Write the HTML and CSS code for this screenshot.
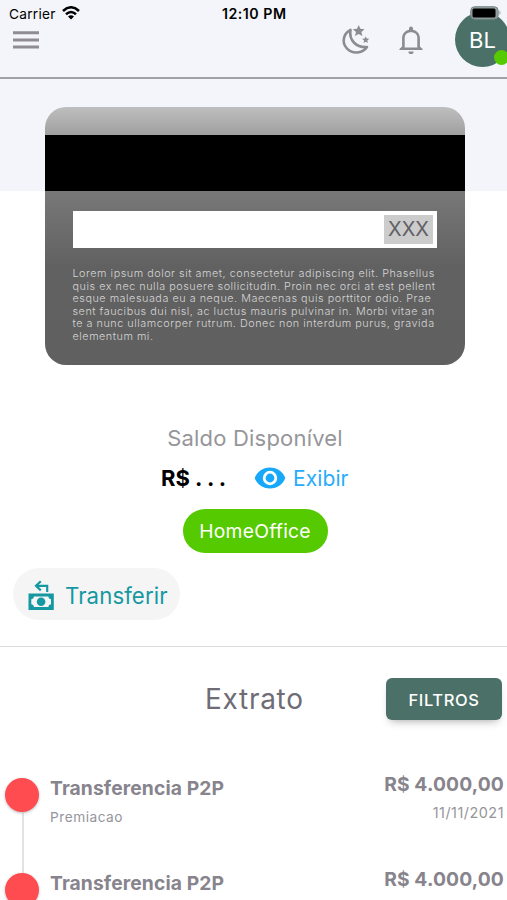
FILE: index.html
```html
<!DOCTYPE html>
<html lang="pt-BR">
<head>
<meta charset="utf-8">
<title>Conta</title>
<link rel="stylesheet" href="styles.css">
</head>
<body>
<header class="topbar">
  <div class="status">
    <span class="carrier">Carrier</span>
    <svg class="wifi" viewBox="0 0 18 14" width="18" height="14"><g fill="none" stroke="#000" stroke-width="2.5"><path d="M1 5Q9-2.4 17 5"/><path d="M4 8.3Q9 3.8 14 8.3"/></g><path d="M6 10.5Q9 7.9 12 10.5L9 13.5Z"/></svg>
    <span class="clock">12:10 PM</span>
    <svg class="battery" viewBox="0 0 32 14" width="32" height="14"><rect x=".7" y=".7" width="27.5" height="12.4" rx="4" fill="#91a09f" stroke="#7d8887"/><rect x="2.5" y="2.5" width="23" height="9" rx="1.6"/><path d="M29.5 4.5q2 2.2 0 4.5z" fill="#8d9998"/></svg>
  </div>
  <nav class="tools">
    <svg class="menu" viewBox="0 0 26 18" width="26" height="18"><path d="M0 1.700h26M0 8.900h26M0 16.100h26" stroke="#8f8c94" stroke-width="3"/></svg>
    <svg class="moon" viewBox="0 0 30 30" width="30" height="30"><path d="M9.500 4.800C2.300 8.500.6 17.200 5.500 23C11 29.500 21.500 28.800 26 22C15.500 22.800 7.600 15.500 9.500 4.800Z" fill="none" stroke="#8c8b93" stroke-width="2.600" stroke-linejoin="round"/><path fill="#8c8b93" d="m17.700 0 1.700 3.800 4.200.4-3.200 2.700 1 4.200-3.700-2.200-3.700 2.200 1-4.200-3.200-2.700 4.200-.4zM24.700 11.300l1 2.300 2.600.2-2 1.700.6 2.600-2.200-1.400-2.200 1.400.6-2.600-2-1.700 2.600-.2z"/></svg>
    <svg class="bell" viewBox="0 0 24 28" width="24" height="28"><path d="M.4 24v-1.100l2.700-2.500v-8.300C3.100 7.800 6 4.600 10 3.700V2.400a2 2 0 0 1 4 0v1.300c4 .9 6.900 4.100 6.900 8.400v8.300l2.700 2.500V24z" fill="#8c8b93"/><path d="M5.700 21.500v-9.700c0-3.300 2.700-5.500 6.300-5.500s6.300 2.200 6.300 5.500v9.700z" fill="#f4f5fa"/><path d="M9.400 25.400h5.200a2.600 2.600 0 0 1-5.200 0" fill="#8c8b93"/></svg>
    <div class="avatar">BL<i class="online"></i></div>
  </nav>
</header>
<main>
  <section class="hero">
    <div class="card">
      <div class="stripe"></div>
      <div class="signature"><span class="cvv">XXX</span></div>
      <p class="terms">Lorem ipsum dolor sit amet, consectetur adipiscing elit. Phasellus<br>quis ex nec nulla posuere sollicitudin. Proin nec orci at est pellent<br>esque malesuada eu a neque. Maecenas quis porttitor odio. Prae<br>sent faucibus dui nisl, ac luctus mauris pulvinar in. Morbi vitae an<br>te a nunc ullamcorper rutrum. Donec non interdum purus, gravida<br>elementum mi.</p>
    </div>
  </section>
  <section class="balance">
    <h2 class="label">Saldo Disponível</h2>
    <div class="amount-row">
      <strong class="amount">R$ . . .</strong>
      <svg class="eye" viewBox="0 0 32 22" width="32" height="22"><path fill="#18a8fa" d="M16 .5C8.500.5 3 5 .7 11 3 17 8.500 21.500 16 21.500S29 17 31.300 11C29 5 23.500.5 16 .5"/><circle cx="16" cy="11" r="7.200" fill="#fff"/><circle cx="16" cy="11" r="4.400" fill="#18a8fa"/></svg>
      <span class="show">Exibir</span>
    </div>
    <span class="tag">HomeOffice</span>
  </section>
  <section class="actions">
    <div class="transfer">
      <svg viewBox="0 0 26 30" width="26" height="30"><path d="M12.800 1.200 8 5.800l4.800 4.600M8.500 5.800h10.700V12" fill="none" stroke="#1698a3" stroke-width="2.200"/><path fill="#1698a3" fill-rule="evenodd" d="M.5 13.500h25.300V30H.5zM6 16.600a3 3 0 0 1-2.700 2.700v5a3 3 0 0 1 2.700 2.700h14.300a3 3 0 0 1 2.700-2.700v-5a3 3 0 0 1-2.700-2.700z"/><circle cx="13.100" cy="21.800" r="4.300" fill="#1698a3"/></svg>
      <span>Transferir</span>
    </div>
  </section>
  <section class="statement">
    <div class="statement-head">
      <h2 class="title">Extrato</h2>
      <button class="filter">FILTROS</button>
    </div>
    <ul class="timeline">
      <li class="entry">
        <div class="rail"><i class="dot"></i></div>
        <div class="info"><b class="name">Transferencia P2P</b><span class="small">Premiacao</span></div>
        <div class="values"><b class="value">R$ 4.000,00</b><span class="small date">11/11/2021</span></div>
      </li>
      <li class="entry">
        <div class="rail"><i class="dot"></i></div>
        <div class="info"><b class="name">Transferencia P2P</b></div>
        <div class="values"><b class="value">R$ 4.000,00</b></div>
      </li>
    </ul>
  </section>
</main>
</body>
</html>
```
FILE: styles.css
```css
* { box-sizing: border-box; }
html, body { height: 900px; overflow: hidden; }
body { margin: 0; background: #fff; font-family: Inter, "Liberation Sans", sans-serif; color: #6f6c76; }
h2, p, ul { margin: 0; padding: 0; font-weight: 400; }
svg { display: block; flex: none; }

.topbar { position: relative; height: 79px; background: #f4f5fa; border-bottom: 2px solid #a1a2a8; }
.status { position: absolute; z-index: 2; top: 6px; left: 9px; right: 5px; height: 16px; display: flex; align-items: center; color: #000; }
.carrier { width: 47px; font-size: 13.700px; letter-spacing: .25px; }
.wifi { margin: -2px 0 0 6px; }
.clock { margin: -1px 0 0 142px; font-size: 14.200px; font-weight: 600; letter-spacing: .5px; white-space: nowrap; }
.battery { margin: -3px 0 0 auto; }
.tools { height: 77px; display: flex; align-items: center; padding: 3px 0 0 13px; overflow: hidden; }
.menu { margin-right: 302px; }
.moon { margin-right: 28px; }
.bell { margin-right: 32px; }
.avatar { position: relative; flex: none; width: 55px; height: 55px; margin-top: -1px; border-radius: 50%; background: #4b7068; color: #fff; font-size: 22px; line-height: 56px; text-align: center; }
.online { position: absolute; right: 1px; bottom: 2px; width: 15px; height: 15px; border-radius: 50%; background: #56ca00; }

.hero { padding: 28px 42px 0 45px; height: 344px; background: linear-gradient(#f4f5fa 112px, #fff 112px); }
.card { height: 258px; padding-top: 28px; border-radius: 21px; overflow: hidden; background: linear-gradient(#bebebe 0, #a0a0a0 28px, #787878 84px, #616161 160px, #606060 100%); }
.stripe { height: 56px; background: #000; }
.signature { display: flex; justify-content: flex-end; margin: 20px 28px 0; height: 37px; padding: 4px; background: #fff; }
.cvv { width: 49px; height: 29px; background: #ccc; color: #606066; font-size: 20px; line-height: 29px; text-align: center; }
.terms { margin: 20px 0 0 27.500px; color: #d5d5d5; font-size: 10.800px; line-height: 12.600px; letter-spacing: .53px; white-space: nowrap; font-weight: 300; }

.balance { display: flex; flex-direction: column; align-items: center; height: 145px; }
.label { margin-left: 3px; font-size: 22px; line-height: 30px; letter-spacing: .2px; color: #96969a; }
.amount-row { display: flex; align-items: center; align-self: stretch; height: 30px; margin-top: 10px; padding-left: 161px; }
.amount { width: 93px; color: #000; font-size: 22px; font-weight: 700; white-space: nowrap; }
.show { margin-left: 7px; color: #28acfa; font-size: 21px; letter-spacing: .1px; }
.tag { width: 145px; height: 44px; margin: 16px 0 0 3px; border-radius: 22px; background: #56ca00; color: #fff; font-size: 19.300px; line-height: 45px; text-align: center; letter-spacing: .25px; }
.actions { height: 79px; padding-left: 13px; border-bottom: 1px solid #dddde0; }
.transfer { display: flex; align-items: center; width: 167px; height: 52px; padding: 2px 0 0 15px; border-radius: 26px; background: #f5f5f5; color: #1698a3; font-size: 22.200px; }
.transfer span { margin-left: 11px; letter-spacing: .1px; }

.statement-head { display: grid; grid-template-columns: 1fr 116px; align-items: center; height: 42px; margin: 31px 5px 0 0; }
.title { padding-left: 205px; font-size: 28px; letter-spacing: .7px; }
.filter { height: 42px; padding: 0; border: 0; border-radius: 6px; background: #4b7068; color: #fff; font: 500 16.500px/44px Inter, sans-serif; letter-spacing: .6px; box-shadow: 0 5px 8px -4px #aaa; }
.timeline { margin-top: 53px; list-style: none; color: #87848d; }
.entry { display: grid; grid-template-columns: 50px 1fr auto; height: 95px; padding-right: 3px; }
.rail { padding: 5px 0 0 5px; background: linear-gradient(#e2e2e4, #e2e2e4) 22px 0 / 2px 100% no-repeat; }
.entry:first-child .rail { background-position: 22px 20px; }
.dot { display: block; width: 34px; height: 34px; border-radius: 50%; background: #ff4c51; box-shadow: 0 1px 3px #bbb; }
.info, .values { display: flex; flex-direction: column; }
.info { padding-top: 3px; }
.values { align-items: flex-end; margin-top: -1px; }
.name, .value { font-size: 19.300px; line-height: 24px; font-weight: 700; white-space: nowrap; }
.name { letter-spacing: .1px; }
.value { letter-spacing: .13px; }
.small { margin-top: 8px; font-size: 13.700px; line-height: 18px; letter-spacing: .5px; color: #96959b; }
.date { font-size: 14.400px; }
```
